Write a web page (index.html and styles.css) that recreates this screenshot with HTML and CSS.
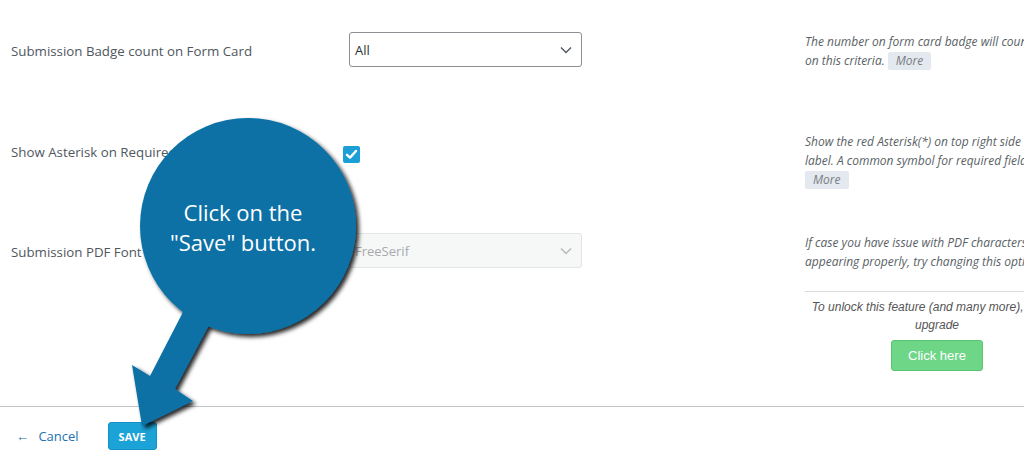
FILE: index.html
```html
<!DOCTYPE html>
<html lang="en">
<head>
    <meta charset="UTF-8">
    <meta name="viewport" content="width=device-width, initial-scale=1.0">
    <title>Form Settings</title>
    <link rel="stylesheet" href="styles.css">
</head>
<body>
    <div id="page">
        <div class="settings">
            <div class="row row-first">
                <label class="label">Submission Badge count on Form Card</label>
                <div class="control">
                    <div class="select">
                        <span>All</span>
                        <svg class="chevron" width="12" height="8" viewBox="0 0 12 8"><path d="M1 1.5 6 6.5 11 1.5" fill="none" stroke="currentColor" stroke-width="1.4"/></svg>
                    </div>
                </div>
                <div class="spacer"></div>
                <div class="desc">
                    <p>The number on form card badge will count based on this criteria. <span class="more">More</span></p>
                </div>
            </div>

            <div class="row row-second">
                <label class="label label-check">Show Asterisk on Required fields</label>
                <div class="control">
                    <span class="checkbox">
                        <svg width="13" height="13" viewBox="0 0 13 13"><path d="M2 6.8 5 9.6 11 3" fill="none" stroke="#fff" stroke-width="2.4" stroke-linecap="round" stroke-linejoin="round"/></svg>
                    </span>
                </div>
                <div class="spacer"></div>
                <div class="desc">
                    <p>Show the red Asterisk(*) on top right side of the label. A common symbol for required fields <span class="more">More</span></p>
                </div>
            </div>

            <div class="row">
                <label class="label">Submission PDF Font</label>
                <div class="control">
                    <div class="select disabled">
                        <span>FreeSerif</span>
                        <svg class="chevron" width="12" height="8" viewBox="0 0 12 8"><path d="M1 1.5 6 6.5 11 1.5" fill="none" stroke="currentColor" stroke-width="1.4"/></svg>
                    </div>
                </div>
                <div class="spacer"></div>
                <div class="desc">
                    <p>If case you have issue with PDF characters not appearing properly, try changing this option</p>
                    <div class="upgrade">
                        <p>To unlock this feature (and many more), please upgrade</p>
                        <a class="btn-upgrade">Click here</a>
                    </div>
                </div>
            </div>
        </div>

        <div class="footer">
            <a class="cancel"><span class="arrow">&larr;</span> Cancel</a>
            <button class="save">SAVE</button>
        </div>

        <div class="callout">
            <svg class="callout-shape" width="420" height="456" viewBox="0 0 420 456">
                <defs>
                    <filter id="shadow" x="-20%" y="-20%" width="140%" height="140%">
                        <feDropShadow dx="3" dy="3" stdDeviation="2" flood-color="#000" flood-opacity="0.85"/>
                    </filter>
                </defs>
                <g filter="url(#shadow)" fill="#0871a6">
                    <circle cx="248" cy="226" r="108"/>
                    <polygon points="186,300 230,318 208,327 175,389 193,401 142,426 132,365 150,376 182,314"/>
                </g>
            </svg>
            <div class="callout-text">Click on the<br>"Save" button.</div>
        </div>
    </div>
</body>
</html>
```

FILE: styles.css
```css
*{
    margin: 0;
    padding: 0;
    box-sizing: border-box;
}
html, body{
    width: 1024px;
    height: 456px;
    overflow: hidden;
    background: #fff;
}
body{
    font-family: "Open Sans", "Noto Sans", sans-serif;
    font-size: 13px;
    color: #50575e;
}
#page{
    position: relative;
    width: 1024px;
    height: 456px;
    overflow: hidden;
}
.settings{
    padding: 32px 0 0 11px;
    width: 1069px;
}
.row{
    display: grid;
    grid-template-columns: 338px 233px 223px 264px;
    align-items: start;
}
.row-first{
    height: 100px;
}
.row-second{
    height: 101px;
}
.label{
    display: block;
    line-height: 19px;
    padding-top: 10px;
    font-size: 13.3px;
    color: #50575e;
}
.label-check{
    padding-top: 11px;
}
.select{
    height: 35px;
    border: 1px solid #8c8f94;
    border-radius: 3px;
    display: flex;
    align-items: center;
    justify-content: space-between;
    padding: 0 9px 0 5px;
    color: #2c3338;
    font-size: 13px;
    background: #fff;
}
.select .chevron{
    color: #50575e;
}
.select.disabled{
    border-color: #e2e4e7;
    background: #f6f7f7;
    color: #a7aaad;
}
.select.disabled .chevron{
    color: #b5b8bb;
}
.checkbox{
    display: flex;
    align-items: center;
    justify-content: center;
    width: 17px;
    height: 17px;
    margin: 14px 0 0 -6px;
    background: #1b9fd6;
    border-radius: 2px;
}
.desc{
    font-size: 12px;
    font-style: italic;
    line-height: 19px;
    color: #5a5f66;
}
.more{
    display: inline-block;
    background: #e4e9ef;
    padding: 0 8px;
    line-height: 18px;
    border-radius: 2px;
    color: #787c82;
}
.upgrade{
    margin-top: 20px;
    border-top: 1px solid #dcdcde;
    padding-top: 6px;
    text-align: center;
    font-family: "Liberation Sans", Arial, sans-serif;
    font-size: 12px;
    line-height: 18px;
    color: #555;
}
.btn-upgrade{
    display: inline-block;
    margin-top: 6px;
    width: 92px;
    height: 31px;
    line-height: 29px;
    background: #6ed687;
    border: 1px solid #5cc274;
    border-radius: 3px;
    color: #fff;
    font-style: normal;
    font-size: 13px;
}
.footer{
    margin-top: 35px;
    border-top: 1px solid #c3c4c7;
    padding: 15px 0 0 16px;
    display: flex;
    align-items: center;
    gap: 29px;
}
.cancel{
    color: #2271b1;
    font-size: 13px;
    line-height: 28px;
}
.cancel .arrow{
    margin-right: 6px;
}
.save{
    height: 28px;
    padding: 0 10px;
    background: #1ba2d7;
    border: 1px solid #1592c4;
    border-radius: 3px;
    color: #fff;
    font-family: "Open Sans", sans-serif;
    font-weight: 700;
    font-size: 11px;
}
.callout{
    position: absolute;
    left: 0;
    top: 0;
    width: 420px;
    height: 456px;
    pointer-events: none;
}
.callout-shape{
    display: block;
}
.callout-text{
    position: absolute;
    left: 140px;
    top: 197px;
    width: 206px;
    text-align: center;
    color: #fff;
    font-family: "Open Sans", sans-serif;
    font-size: 22px;
    line-height: 30px;
}
```
